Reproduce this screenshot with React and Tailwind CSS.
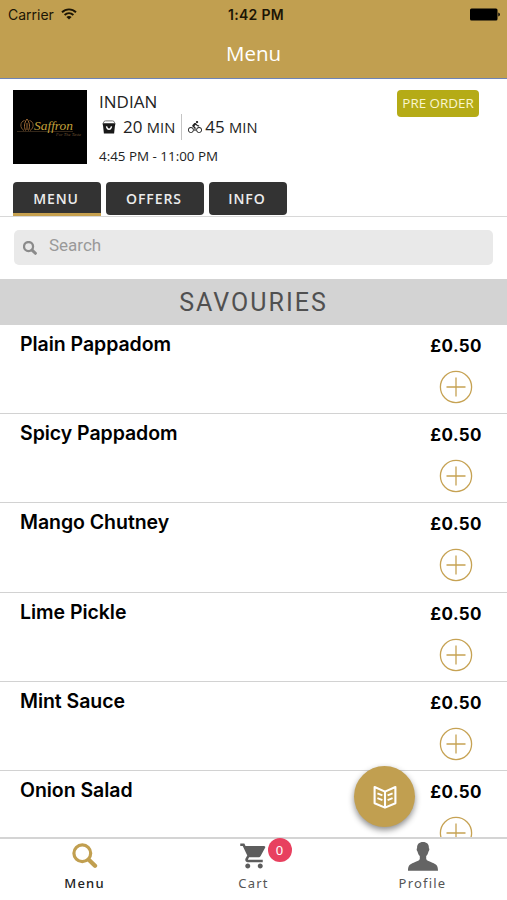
import clsx from 'clsx';
import { MdDirectionsBike, MdShoppingCart } from 'react-icons/md';

const ITEMS = [
  { name: 'Plain Pappadom', price: '£0.50' },
  { name: 'Spicy Pappadom', price: '£0.50' },
  { name: 'Mango Chutney', price: '£0.50' },
  { name: 'Lime Pickle', price: '£0.50' },
  { name: 'Mint Sauce', price: '£0.50' },
  { name: 'Onion Salad', price: '£0.50' },
];

const TABS = [
  { label: 'MENU', width: 'w-[88px]', active: true },
  { label: 'OFFERS', width: 'w-[98px]' },
  { label: 'INFO', width: 'w-[78px]' },
];

function WifiIcon() {
  return (
    <svg width="16" height="12" viewBox="0 0 16 12" fill="none" stroke="#1c1505" strokeWidth="1.9">
      <path d="M1 4.3C5 .4 11 .4 15 4.3" />
      <path d="M3.6 7C6.2 4.6 9.8 4.6 12.4 7" />
      <path d="M8 11.6 5.4 9C6.9 7.7 9.1 7.7 10.6 9Z" fill="#1c1505" stroke="none" />
    </svg>
  );
}

function BatteryIcon() {
  return (
    <svg width="30" height="13" viewBox="0 0 30 13" fill="#000">
      <rect x="0" y=".5" width="27.5" height="12" rx="1.5" />
      <path d="M28.3 4.5q1.6.4 1.6 2t-1.6 2z" />
    </svg>
  );
}

function SearchIcon({ size, width }) {
  return (
    <svg width={size} height={size} viewBox="0 0 26 26" fill="none" stroke="currentColor" strokeWidth={width}>
      <circle cx="10.3" cy="10.3" r="8.4" />
      <path d="M16.8 16.8 23 22.8" strokeWidth={width * 1.35} strokeLinecap="round" />
    </svg>
  );
}

function BagIcon() {
  return (
    <svg width="14" height="14" viewBox="0 0 14 14">
      <path d="M1.4 3Q1.6.9 3.4.9H10.6Q12.4.9 12.6 3" fill="none" stroke="#777" strokeWidth="1" />
      <path d="M.5 3.2H13.5L12.9 6.2 12.1 13.4H1.9L1.1 6.2Z" fill="#181818" />
      <path d="M4.4 6.4 5.4 8.6Q7 9.8 8.6 8.6L9.6 6.4" fill="none" stroke="#fff" strokeWidth="1.4" />
    </svg>
  );
}

function PlusIcon() {
  return (
    <svg width="34" height="34" viewBox="0 0 34 34" fill="none" stroke="#c6a253" strokeWidth="1.3">
      <circle cx="17" cy="17" r="15.6" />
      <path d="M7.5 17h19M17 7.5v19" />
    </svg>
  );
}

function BookIcon() {
  return (
    <svg width="24" height="24" viewBox="0 0 24 24" fill="none" stroke="#fff" strokeLinejoin="round">
      <path d="M1.6 2 12 6.6 22.4 2V18.3L12 22.6 1.6 18.3ZM12 6.6v16" strokeWidth="2.1" />
      <path d="m4.4 8.4 5 2M4.4 13.2l5 2M19.6 8.4l-5 2M19.6 13.2l-5 2" strokeWidth="1.9" />
    </svg>
  );
}

function PersonIcon() {
  return (
    <svg width="30" height="29" viewBox="0 0 30 29" fill="#646464">
      <path d="M15 0C11.2 0 8.9 2.2 9.1 6.2c-.8.3-.5 2.5.5 3.6.4 2 1.1 3.2 2.2 4.2v3.1c-.5 1.8-3.3 2.5-6.2 3.7C1.8 22.3 0 23.6 0 28.7h30c0-5.1-1.8-6.4-5.6-7.9-2.9-1.2-5.7-1.9-6.2-3.7V14c1.1-1 1.8-2.2 2.2-4.2 1-1.1 1.3-3.3.5-3.6C21.1 2.2 18.8 0 15 0Z" />
    </svg>
  );
}

function Logo() {
  return (
    <svg width="74" height="74" viewBox="0 0 74 74" className="shrink-0 bg-black">
      <g fill="none" stroke="#7d5730" strokeWidth="1">
        <path d="M11 40.5C6.5 38 7 31.500 11.500 30.500M17 40.500c4.500-2.500 4-9-.5-10" />
        <path d="M14 29c-3 4-3 8-1.500 11.500M14 29c3 4 3 8 1.500 11.500M14 33v7" stroke="#a06a35" />
        <path d="M4 41.500h56" stroke="#4a3824" strokeWidth=".7" />
      </g>
      <text x="21" y="39.500" textLength="39" lengthAdjust="spacingAndGlyphs" fill="#c4a03a" className="font-['Liberation_Serif'] text-[13px] italic">
        Saffron
      </text>
      <text x="43" y="45.500" textLength="25" lengthAdjust="spacingAndGlyphs" fill="#6e5335" className="font-['Liberation_Serif'] text-[5px] italic">
        For The Taste
      </text>
    </svg>
  );
}

function Header() {
  return (
    <header className="h-[79px] shrink-0 border-b border-[#6f84b5] bg-[#c19f50]">
      <div className="grid h-7 grid-cols-3 items-center pl-2 pr-[7px] font-['Inter'] text-[14px] text-[#1c1505]">
        <div className="flex items-center gap-[7px]">
          <span>Carrier</span>
          <WifiIcon />
        </div>
        <span className="pl-1 text-center font-semibold tracking-[0.3px]">1:42 PM</span>
        <div className="flex justify-end">
          <BatteryIcon />
        </div>
      </div>
      <h1 className="text-center font-['Open_Sans'] text-[20.5px] leading-[50px] text-white">Menu</h1>
    </header>
  );
}

function Restaurant() {
  return (
    <section className="flex h-[103px] shrink-0 pl-[13px] pr-7 pt-[11px] font-['Open_Sans'] text-[#222]">
      <Logo />
      <div className="ml-3 flex-1">
        <div className="text-[17px] leading-6">INDIAN</div>
        <div className="flex h-[26px] items-center whitespace-nowrap text-[17px]">
          <span className="ml-[3px]"><BagIcon /></span>
          <span className="ml-[7px]">20 <span className="text-[14.7px]">MIN</span></span>
          <span className="mx-1.5 h-[26px] w-px bg-[#c4c4c4]" />
          <MdDirectionsBike size={14} />
          <span className="ml-[3px]">45 <span className="text-[14.7px]">MIN</span></span>
        </div>
        <div className="mt-[5px] text-[13.4px] leading-[22px]">4:45 PM - 11:00 PM</div>
      </div>
      <span className="h-[27px] w-[82px] rounded-[4px] bg-[#b5ab16] text-center text-[13.4px] leading-[27px] text-[#faf6cf]">
        PRE ORDER
      </span>
    </section>
  );
}

function Tabs() {
  return (
    <nav className="flex h-[35px] shrink-0 items-start gap-[5px] border-b border-[#d8d8d8] pl-[13px]">
      {TABS.map((tab) => (
        <button
          key={tab.label}
          className={clsx(
            "bg-[#333] pr-0.5 font-['Open_Sans'] text-[14px] font-semibold tracking-[0.9px] leading-[33px] text-[#ececec]",
            tab.width,
            tab.active ? 'h-[34px] rounded-t-[4px] border-b-[3px] border-[#c6a04e]' : 'h-[33px] rounded-[4px]',
          )}
        >
          {tab.label}
        </button>
      ))}
    </nav>
  );
}

function MenuRow({ item }) {
  return (
    <li className="flex h-[89.2px] shrink-0 justify-between border-b border-[#d2d2d2] pl-5 pr-[25px] text-black">
      <span className="pt-[5px] font-['Inter'] text-[19.5px] font-semibold leading-7 tracking-[-0.05px]">{item.name}</span>
      <div className="flex flex-col items-end">
        <span className="pt-[7px] font-['Inter'] text-[17px] font-bold leading-7 tracking-[0.4px]">{item.price}</span>
        <button className="mr-[9px] mt-[10px]"><PlusIcon /></button>
      </div>
    </li>
  );
}

function BottomNav() {
  return (
    <nav className="grid h-[63px] shrink-0 grid-cols-3 border-t-2 border-[#d4d4d4] bg-white font-['Noto_Sans'] text-[13px] tracking-[1.2px] text-[#555]">
      <div className="flex flex-col items-center">
        <span className="flex h-[34px] items-center text-[#c19f50]"><SearchIcon size={26} width={3.2} /></span>
        <span className="leading-5 font-medium text-[#222]">Menu</span>
      </div>
      <div className="flex flex-col items-center">
        <span className="relative flex h-[34px] items-center text-[#5d5d5d]">
          <MdShoppingCart size={30} />
          <span className="absolute left-[29px] -top-px size-6 rounded-full bg-[#e8405f] text-center text-[13px] leading-6 tracking-normal text-white">0</span>
        </span>
        <span className="leading-5">Cart</span>
      </div>
      <div className="flex flex-col items-center">
        <span className="flex h-[34px] items-center"><PersonIcon /></span>
        <span className="leading-5">Profile</span>
      </div>
    </nav>
  );
}

export default function App() {
  return (
    <div className="relative flex h-[900px] w-[507px] flex-col overflow-hidden bg-white">
      <Header />
      <Restaurant />
      <Tabs />
      <div className="h-[62px] shrink-0 px-[14px] pt-[13px]">
        <div className="flex h-[35px] items-center gap-3 rounded-[5px] bg-[#e9e9e9] pl-[9px] text-[#8b8b8b]">
          <SearchIcon size={14} width={4.2} />
          <span className="pb-1 font-['Roboto'] text-[17px] text-[#999]">Search</span>
        </div>
      </div>
      <h2 className="h-[46px] shrink-0 bg-[#d3d3d3] text-center font-['Roboto'] text-[25px] leading-[47px] tracking-[2px] text-[#505050]">
        SAVOURIES
      </h2>
      <ul className="flex min-h-0 flex-1 flex-col overflow-hidden">
        {ITEMS.map((item) => (
          <MenuRow key={item.name} item={item} />
        ))}
      </ul>
      <BottomNav />
      <button className="absolute left-[354px] top-[766px] flex size-[61px] items-center justify-center rounded-full bg-[#c19f50] shadow-[0_3px_6px_rgba(0,0,0,0.45)]">
        <BookIcon />
      </button>
    </div>
  );
}
